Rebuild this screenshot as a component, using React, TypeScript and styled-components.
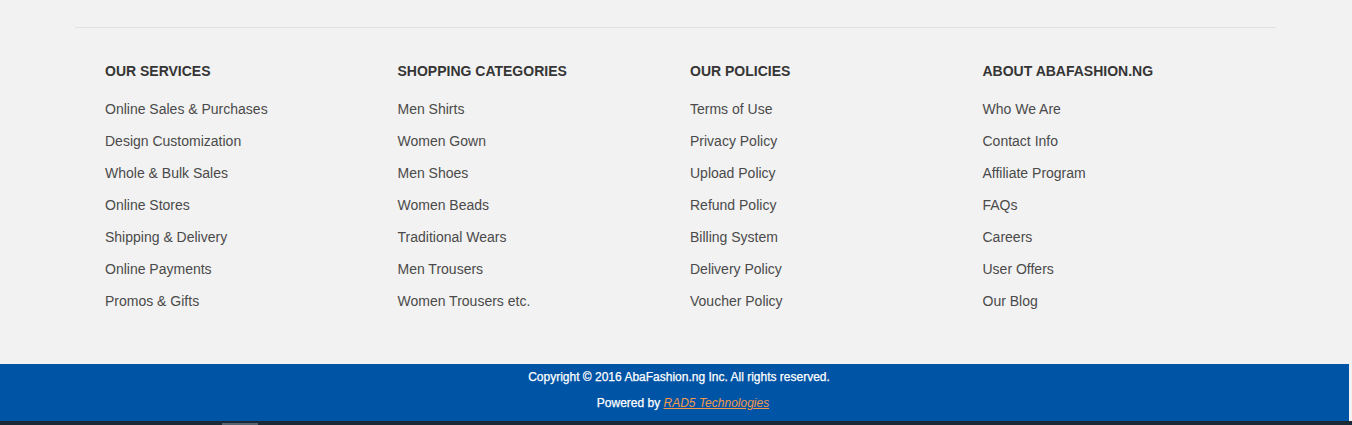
import React from "react";
import styled, { createGlobalStyle } from "styled-components";

const Global = createGlobalStyle`
  html, body { margin: 0; padding: 0; background: #f2f2f2; }
  body { font-family: "Liberation Sans", Arial, sans-serif; }
`;

const Page = styled.div`
  width: 100%;
  overflow: hidden;
`;

const Top = styled.div`
  padding-top: 27px;
  height: 364px;
  box-sizing: border-box;
`;

const Rule = styled.hr`
  margin: 0 76px 0 75px;
  border: 0;
  border-top: 1px solid #e1e1e1;
  height: 0;
`;

const Row = styled.div`
  display: grid;
  grid-template-columns: repeat(4, 292.5px);
  width: 1170px;
  margin-left: 90px;
  padding-top: 33px;
`;

const Col = styled.div`
  padding: 0 15px;
`;

const Heading = styled.h4`
  margin: 0 0 18px;
  font-size: 14px;
  line-height: 20px;
  font-weight: bold;
  color: #353535;
  text-transform: uppercase;
`;

const List = styled.ul`
  list-style: none;
  margin: 0;
  padding: 0;
  display: flex;
  flex-direction: column;
  gap: 12px;
`;

const Item = styled.li`
  font-size: 14px;
  line-height: 20px;
  color: #4a4a4a;
`;

const Bottom = styled.div`
  width: calc(100% - 3px);
  background: #0054a6;
  height: 57px;
  padding-left: 9px;
  box-sizing: border-box;
  text-align: center;
  color: #ffffff;
  font-size: 12px;
  font-weight: normal;
`;

const Line = styled.div<{ $shift?: number }>`
  line-height: 26px;
  padding-left: ${(p) => p.$shift ?? 0}px;
  -webkit-text-stroke: 0.25px #ffffff;
`;

const Credit = styled.a`
  color: #f39a4a;
  font-style: italic;
  text-decoration: underline;
  -webkit-text-stroke: 0;
`;

const Strip = styled.div`
  height: 4px;
  background: #1b2836;
  display: flex;
`;

const Tab = styled.div`
  margin-left: 222px;
  width: 36px;
  margin-top: 2px;
  height: 2px;
  background: #556270;
`;

const columns = [
  {
    title: "Our Services",
    items: [
      "Online Sales & Purchases",
      "Design Customization",
      "Whole & Bulk Sales",
      "Online Stores",
      "Shipping & Delivery",
      "Online Payments",
      "Promos & Gifts",
    ],
  },
  {
    title: "Shopping Categories",
    items: [
      "Men Shirts",
      "Women Gown",
      "Men Shoes",
      "Women Beads",
      "Traditional Wears",
      "Men Trousers",
      "Women Trousers etc.",
    ],
  },
  {
    title: "Our Policies",
    items: [
      "Terms of Use",
      "Privacy Policy",
      "Upload Policy",
      "Refund Policy",
      "Billing System",
      "Delivery Policy",
      "Voucher Policy",
    ],
  },
  {
    title: "About AbaFashion.ng",
    items: [
      "Who We Are",
      "Contact Info",
      "Affiliate Program",
      "FAQs",
      "Careers",
      "User Offers",
      "Our Blog",
    ],
  },
];

export default function App() {
  return (
    <Page>
      <Global />
      <Top>
        <Rule />
        <Row>
          {columns.map((c) => (
            <Col key={c.title}>
              <Heading>{c.title}</Heading>
              <List>
                {c.items.map((i) => (
                  <Item key={i}>{i}</Item>
                ))}
              </List>
            </Col>
          ))}
        </Row>
      </Top>
      <Bottom>
        <Line>Copyright © 2016 AbaFashion.ng Inc. All rights reserved.</Line>
        <Line $shift={8}>
          Powered by <Credit href="#">RAD5 Technologies</Credit>
        </Line>
      </Bottom>
      <Strip>
        <Tab />
      </Strip>
    </Page>
  );
}
